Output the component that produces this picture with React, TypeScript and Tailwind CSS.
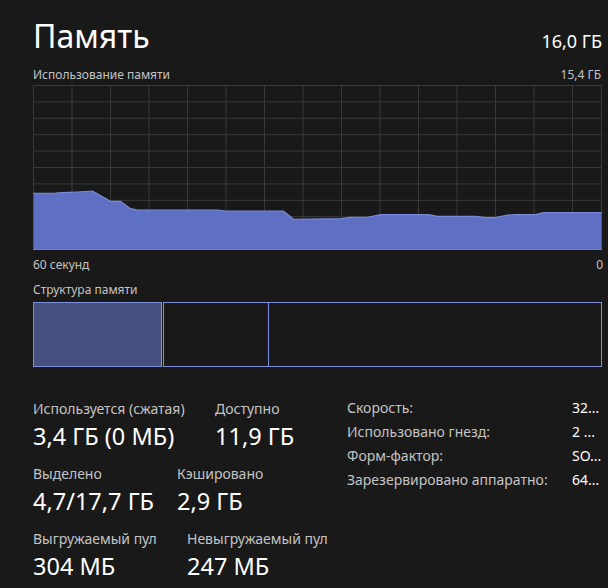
import React from 'react';

const FONT = '"Noto Sans", "Open Sans", sans-serif';

// usage curve, chart coords (569 x 165)
const points: [number, number][] = [
  [0, 108.3], [22, 108], [29, 107.7], [44, 107], [59, 106], [77, 116.3], [87, 116.3],
  [97, 123.7], [104, 125], [184, 125], [192, 126], [250, 126], [260, 134.3], [308, 133.7],
  [317, 132.3], [335, 132], [347, 129.7], [395, 129.7], [404, 131.3], [442, 131.3],
  [452, 132.7], [462, 132.7], [474, 130], [482, 129.7], [502, 129.7], [510, 127.7], [568, 127.7],
];

const hLines = Array.from({ length: 11 }, (_, i) => 0.5 + i * 16.4);
const vLines = Array.from({ length: 15 }, (_, i) => 0.5 + i * 38.5);

const UsageChart: React.FC = () => {
  const line = points.map(([x, y]) => `${x + 0.5},${y}`).join(' ');
  const area = `0.5,164.5 ${line} 568.5,164.5`;
  return (
    <svg width={569} height={165} viewBox="0 0 569 165" className="block">
      {hLines.map((y) => (
        <line key={`h${y}`} x1={0} x2={569} y1={y} y2={y} stroke="#3a3a3a" strokeWidth={1} />
      ))}
      {vLines.map((x) => (
        <line key={`v${x}`} x1={x} x2={x} y1={0} y2={165} stroke="#3a3a3a" strokeWidth={1} />
      ))}
      <line x1={568.5} x2={568.5} y1={0} y2={165} stroke="#3a3a3a" strokeWidth={1} />
      <polygon points={area} fill="#5f70c4" />
      <polyline points={line} fill="none" stroke="#7a8ad8" strokeWidth={1.2} />
      <line x1={0} x2={569} y1={164.5} y2={164.5} stroke="#7080d0" strokeWidth={1} />
    </svg>
  );
};

const Stat: React.FC<{ label: string; value: string; width?: string }> = ({ label, value, width }) => (
  <div className={width}>
    <div className="text-[14px] leading-[20px] text-[#c4c4c4] whitespace-nowrap">{label}</div>
    <div className="mt-[2px] text-[23.5px] leading-[30px] text-white whitespace-nowrap">{value}</div>
  </div>
);

const specs = [
  { label: 'Скорость:', value: '32...' },
  { label: 'Использовано гнезд:', value: '2 ...' },
  { label: 'Форм-фактор:', value: 'SO...' },
  { label: 'Зарезервировано аппаратно:', value: '64...' },
];

const App: React.FC = () => {
  return (
    <div className="w-[608px] h-[588px] overflow-hidden bg-[#191919] text-white pl-[33px] pt-[19px]" style={{ fontFamily: FONT }}>
      <div className="w-[568px] flex items-baseline justify-between">
        <h1 className="text-[32px] leading-[34px] font-normal">Память</h1>
        <span className="text-[18px] leading-[34px] -mr-[1px]">16,0 ГБ</span>
      </div>

      <div className="mt-[9px] w-[568px] flex justify-between text-[12px] leading-[16px] text-[#c4c4c4]">
        <span>Использование памяти</span>
        <span>15,4 ГБ</span>
      </div>

      <div className="mt-[2px]">
        <UsageChart />
      </div>

      <div className="mt-[7px] w-[570px] flex justify-between text-[12px] leading-[16px] text-[#c4c4c4]">
        <span>60 секунд</span>
        <span>0</span>
      </div>

      <div className="mt-[9px] text-[12px] leading-[16px] text-[#c4c4c4]">Структура памяти</div>

      {/* структура памяти */}
      <div className="mt-[4px] w-[569px] h-[65px] flex">
        <div className="w-[129px] border border-[#7f8fe0] bg-[#47517f]" />
        <div className="ml-[1px] w-[106px] border border-[#7f8fe0]" />
        <div className="flex-1 border border-l-0 border-[#7f8fe0]" />
      </div>

      <div className="mt-[29px] flex">
        <div className="w-[314px] flex flex-col gap-[13px] pt-[3px]">
          <div className="flex">
            <Stat label="Используется (сжатая)" value="3,4 ГБ (0 МБ)" width="w-[182px]" />
            <Stat label="Доступно" value="11,9 ГБ" />
          </div>
          <div className="flex">
            <Stat label="Выделено" value="4,7/17,7 ГБ" width="w-[144px]" />
            <Stat label="Кэшировано" value="2,9 ГБ" />
          </div>
          <div className="flex">
            <Stat label="Выгружаемый пул" value="304 МБ" width="w-[154px]" />
            <Stat label="Невыгружаемый пул" value="247 МБ" />
          </div>
        </div>

        <div className="flex flex-col text-[14px] leading-[24px]">
          {specs.map((s) => (
            <div key={s.label} className="flex">
              <span className="w-[225px] text-[#c4c4c4] whitespace-nowrap">{s.label}</span>
              <span className="w-[30px] text-white whitespace-nowrap overflow-hidden">{s.value}</span>
            </div>
          ))}
        </div>
      </div>
    </div>
  );
};

export default App;
